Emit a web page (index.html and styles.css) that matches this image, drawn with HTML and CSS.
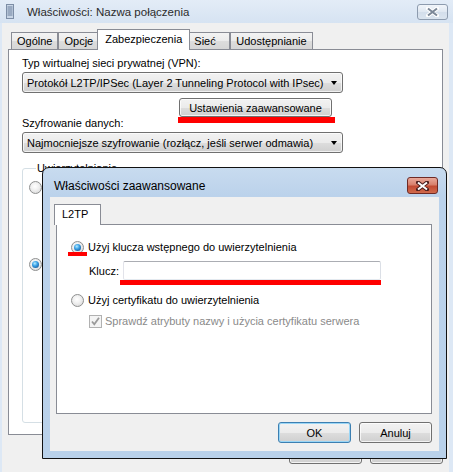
FILE: index.html
```html
<!DOCTYPE html>
<html lang="pl">
<head>
<meta charset="utf-8">
<title>Właściwości: Nazwa połączenia</title>
<link rel="stylesheet" href="styles.css">
</head>
<body>
<div class="win">
  <div class="titlebar">
    <svg class="appicon" width="8" height="15" viewBox="0 0 8 15">
      <rect x="0.5" y="0.5" width="7" height="14" fill="#c9d6e6" stroke="#7d8ea6"/>
      <path d="M1.5 3h5M1.5 5h5M1.5 7h5M1.5 9h5M1.5 11h5" stroke="#6a7f9c" stroke-width="1"/>
    </svg>
    <span class="title">Właściwości: Nazwa połączenia</span>
    <span class="xbtn xbtn-off">
      <svg width="13" height="10" viewBox="0 0 13 10">
        <path d="M2 1.5 L11 8.5 M11 1.5 L2 8.5" stroke="#ffffff" stroke-width="4" stroke-linecap="round"/>
        <path d="M2 1.5 L11 8.5 M11 1.5 L2 8.5" stroke="#7b8797" stroke-width="2"/>
      </svg>
    </span>
  </div>
  <div class="client">
    <div class="tabs">
      <div class="tab">Ogólne</div>
      <div class="tab">Opcje</div>
      <div class="tab active">Zabezpieczenia</div>
      <div class="tab wide">Sieć</div>
      <div class="tab">Udostępnianie</div>
    </div>
    <div class="panel">
      <div class="label">Typ wirtualnej sieci prywatnej (VPN):</div>
      <div class="combo"><span>Protokół L2TP/IPSec (Layer 2 Tunneling Protocol with IPsec)</span><i class="arrow"></i></div>
      <div class="advrow"><button class="btn adv">Ustawienia zaawansowane</button></div>
      <div class="label">Szyfrowanie danych:</div>
      <div class="combo"><span>Najmocniejsze szyfrowanie (rozłącz, jeśli serwer odmawia)</span><i class="arrow"></i></div>
      <fieldset class="group">
        <legend>Uwierzytelnianie</legend>
        <span class="radio r1"></span>
        <span class="radio on r2"></span>
      </fieldset>
    </div>
    <div class="footer">
      <span class="btn obtn"></span>
      <span class="btn obtn"></span>
    </div>
  </div>

  <div class="dialog">
    <div class="dtitle">
      <span class="dt">Właściwości zaawansowane</span>
      <span class="xbtn xbtn-red">
        <svg width="13" height="10" viewBox="0 0 13 10">
          <path d="M2 1.5 L11 8.5 M11 1.5 L2 8.5" stroke="#4a1d1d" stroke-width="4" stroke-linecap="round"/>
          <path d="M2 1.5 L11 8.5 M11 1.5 L2 8.5" stroke="#ffffff" stroke-width="2"/>
        </svg>
      </span>
    </div>
    <div class="dclient">
      <div class="dtabs"><div class="tab active dtab">L2TP</div></div>
      <div class="dpanel">
        <div class="row row1">
          <span class="radio on mark"></span>
          <span class="rtext">Użyj klucza wstępnego do uwierzytelnienia</span>
        </div>
        <div class="row row2">
          <span class="klabel">Klucz:</span>
          <span class="input"></span>
        </div>
        <div class="row row3">
          <span class="radio"></span>
          <span class="rtext">Użyj certyfikatu do uwierzytelnienia</span>
        </div>
        <div class="row row4">
          <span class="check">
            <svg width="11" height="11" viewBox="0 0 11 11"><path d="M2 5.5 L4.3 8.3 L9 1.8" fill="none" stroke="#9a9a9a" stroke-width="1.8"/></svg>
          </span>
          <span class="ctext">Sprawdź atrybuty nazwy i użycia certyfikatu serwera</span>
        </div>
      </div>
      <div class="dbuttons">
        <button class="btn dbtn def">OK</button>
        <button class="btn dbtn">Anuluj</button>
      </div>
    </div>
  </div>
</div>
</body>
</html>
```
FILE: styles.css
```css
* { box-sizing: border-box; }
html, body { margin: 0; padding: 0; }
body {
  width: 453px; height: 472px; overflow: hidden;
  font-family: "Liberation Sans", Arial, sans-serif;
  font-size: 11px; color: #000; background: #f0f0f0;
}
.win {
  position: relative; width: 453px; height: 472px;
  display: flex; flex-direction: column;
  background: #dde8f5;
}
.titlebar {
  height: 23px; flex: none;
  display: flex; align-items: center;
  padding-left: 6px;
  background: linear-gradient(#e3ecf7, #d6e3f2);
}
.appicon { flex: none; margin-right: 13px; }
.title { font-size: 11.5px; color: #2b2b2b; }
.xbtn {
  display: flex; align-items: center; justify-content: center;
  width: 31px; height: 16px; border-radius: 3px; flex: none;
}
.xbtn-off {
  margin-left: auto; margin-right: 5px; align-self: flex-start; margin-top: 4px;
  border: 1px solid #8d9bae;
  background: linear-gradient(#f1f5fa, #dfe7f1 50%, #d3deeb 51%, #dae4ef);
}
.client {
  flex: 1; margin: 0 4px 0 2px; background: #f0f0f0;
  display: flex; flex-direction: column;
}
.tabs {
  height: 26px; flex: none; display: flex; align-items: flex-end;
  padding-left: 9px; position: relative; z-index: 1;
}
.tab {
  height: 17px; border: 1px solid #898c95; border-bottom: none;
  padding: 1px 5px 0; line-height: 14px;
  background: linear-gradient(#f3f3f3, #ebebeb 50%, #dddddd 51%, #d6d6d6);
  white-space: nowrap;
}
.tab.wide { min-width: 42px; }
.tab.active {
  height: 21px; background: #fff; margin: 0 -2px -1px; position: relative; z-index: 2;
  padding: 2px 7px 0; line-height: 14px;
}
.panel {
  height: 386px; flex: none; margin: 0 6px;
  background: #fff; border: 1px solid #898c95;
  padding: 7px 13px 0 13px;
  display: flex; flex-direction: column;
}
.label { line-height: 13px; height: 13px; }
.combo {
  margin-top: 2px; height: 21px; width: 321px;
  border: 1px solid #707070; border-radius: 3px;
  background: linear-gradient(#f2f2f2, #ebebeb 50%, #dddddd 51%, #cfcfcf);
  box-shadow: inset 0 0 0 1px rgba(255,255,255,0.7);
  display: flex; align-items: center; padding: 0 0 0 4px;
  white-space: nowrap;
}
.combo span { flex: 1; }
.arrow {
  width: 0; height: 0; margin-right: 5px;
  border-left: 3.5px solid transparent; border-right: 3.5px solid transparent;
  border-top: 4px solid #000;
}
.advrow { margin-top: 5px; height: 19px; padding-left: 157px; }
.btn {
  font: inherit; color: #000; padding: 0; margin: 0;
  border: 1px solid #707070; border-radius: 3px;
  background: linear-gradient(#f2f2f2, #ebebeb 50%, #dddddd 51%, #cfcfcf);
  box-shadow: inset 0 0 0 1px rgba(255,255,255,0.75);
}
.adv { width: 153px; height: 19px; position: relative; }
.adv::after {
  content: ""; position: absolute; left: -2px; top: 18px;
  width: 157px; height: 6px; background: #ff0000;
}
.group {
  margin: 9px 0 0; height: 261px; width: 405px;
  border: 1px solid #d5dfe5; border-radius: 3px;
  padding: 6px 6px 0;
}
.group legend { padding: 0 1px; margin-left: 7px; line-height: 13px; font-size: 11px; }
.group .r1 { display: block; margin-top: 0; }
.group .r2 { display: block; margin-top: 64px; }
.radio {
  display: inline-block; width: 13px; height: 13px; border-radius: 50%;
  border: 1px solid #8e8f8f; flex: none; position: relative;
  background: radial-gradient(circle at 45% 40%, #ffffff 0%, #f1f1f1 40%, #d2d2d2 100%);
}
.radio.on::after {
  content: ""; position: absolute; left: 2px; top: 2px; width: 7px; height: 7px;
  border-radius: 50%;
  background: radial-gradient(circle at 40% 35%, #b6ecff 0%, #3aa1e6 40%, #0c3e7c 100%);
}
.footer {
  display: flex; justify-content: flex-end; gap: 8px; padding: 6px 6px 0 0;
}
.obtn { width: 73px; height: 23px; display: block; }

.dialog {
  position: absolute; left: 42px; top: 167px; width: 405px; height: 292px;
  border: 1px solid #111; border-radius: 7px 7px 0 0;
  background: linear-gradient(#c8dbef, #bbd2eb 28px, #b9d1ea);
  padding: 0 7px 7px; display: flex; flex-direction: column;
  z-index: 5;
}
.dtitle { height: 29px; flex: none; display: flex; align-items: flex-start; }
.dt { margin-left: 4px; margin-top: 11px; font-size: 12px; line-height: 14px; }
.xbtn-red {
  margin-left: auto; margin-top: 9px; margin-right: 1px; height: 17px;
  border: 1px solid #6e2a25;
  background: linear-gradient(#e9a99b, #d8806c 45%, #c24a33 55%, #d06a4c);
}
.dclient {
  flex: 1; background: #f0f0f0; padding: 7px 7px 8px 6px;
  display: flex; flex-direction: column;
}
.dtabs { height: 20px; flex: none; display: flex; align-items: flex-end; position: relative; z-index: 1; }
.dtab { margin: 0 0 -1px -1px; padding: 3px 6px 0 6px; width: 47px; }
.dpanel {
  height: 190px; flex: none; border: 1px solid #898c95; background: #fff;
  padding: 16px 0 0 14px;
}
.row { display: flex; align-items: center; }
.row1 { height: 13px; }
.rtext { margin-left: 4px; line-height: 13px; white-space: nowrap; }
.mark::before {
  content: ""; position: absolute; left: -4px; top: 10px; width: 19px; height: 4px;
  background: #ff0000; z-index: 1;
}
.row2 { margin-top: 7px; padding-left: 18px; height: 19px; }
.klabel { width: 34px; flex: none; }
.input {
  width: 258px; height: 19px; border: 1px solid #abadb3; border-radius: 2px;
  background: #fff; position: relative;
  border-top-color: #abadb3; border-left-color: #e2e3ea; border-right-color: #dbdfe6; border-bottom-color: #e3e9ef;
}
.input::after {
  content: ""; position: absolute; left: -4px; top: 18px; width: 261px; height: 5px;
  background: #ff0000;
}
.row3 { margin-top: 14px; height: 13px; }
.row4 { margin-top: 8px; height: 13px; padding-left: 18px; }
.check {
  width: 13px; height: 13px; flex: none; border: 1px solid #b1b1b1;
  background: #f4f4f4; display: flex; align-items: center; justify-content: center;
}
.ctext { margin-left: 3px; color: #8a8a8a; white-space: nowrap; line-height: 13px; }
.dbuttons { margin-top: 8px; display: flex; justify-content: flex-end; gap: 8px; }
.dbtn { width: 73px; height: 21px; }
.def { border-color: #3c7fb1; box-shadow: inset 0 0 0 1px #9ad6f6; }
```
